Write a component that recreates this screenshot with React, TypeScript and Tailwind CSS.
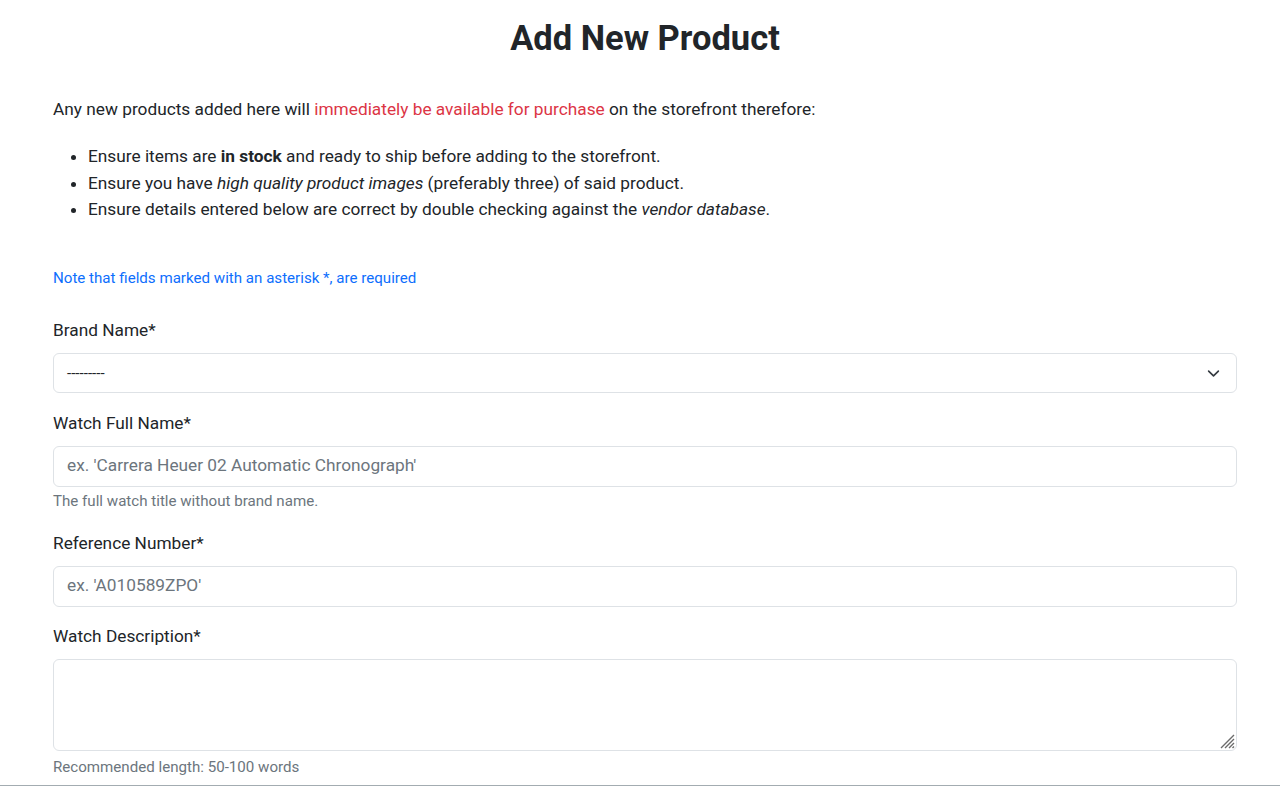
import React from "react";

export default function App() {
  const font = { fontFamily: "Roboto, 'Liberation Sans', sans-serif" };
  return (
    <div
      className="h-[786px] w-[1280px] overflow-hidden bg-white text-[#212529] border-b border-[#a3acb1]"
      style={font}
    >
      <div className="ml-[53px] w-[1184px]">
        <h1 className="mt-[18px] text-center text-[34.5px] leading-[41px] font-bold text-[#212529]">
          Add New Product
        </h1>
        <p className="mt-[37px] text-[17.28px] leading-[26px]">
          Any new products added here will{" "}
          <span className="text-[#dc3545]">immediately be available for purchase</span> on the
          storefront therefore:
        </p>
        <ul className="mt-[21px] list-disc pl-[35px] text-[17.28px] leading-[26.5px]">
          <li>
            Ensure items are <b className="font-bold">in stock</b> and ready to ship before adding to
            the storefront.
          </li>
          <li>
            Ensure you have <i>high quality product images</i> (preferably three) of said product.
          </li>
          <li>
            Ensure details entered below are correct by double checking against the{" "}
            <i>vendor database</i>.
          </li>
        </ul>
        <p className="mt-[44px] text-[15.12px] leading-[22px] text-[#0d6efd]">
          Note that fields marked with an asterisk *, are required
        </p>

        <form className="mt-[28px]">
          <label className="block text-[17.28px] leading-[26px]">Brand Name*</label>
          <div className="relative mt-[10px] h-[40px] rounded-[6px] border border-[#dee2e6] bg-white">
            <span className="absolute left-[13px] top-[9px] text-[15.12px] leading-[20px] text-[#212529]">
              ---------
            </span>
            <svg
              className="absolute right-[16px] top-[13px]"
              width="13"
              height="13"
              viewBox="0 0 16 16"
              fill="none"
              stroke="#343a40"
              strokeWidth="2"
              strokeLinecap="round"
              strokeLinejoin="round"
            >
              <path d="m2 5 6 6 6-6" />
            </svg>
          </div>

          <label className="mt-[17px] block text-[17.28px] leading-[26px]">Watch Full Name*</label>
          <div className="mt-[10px] flex h-[41px] items-center rounded-[6px] border border-[#dee2e6] px-[13px] text-[17.28px] text-[#6c757d]">
            ex. 'Carrera Heuer 02 Automatic Chronograph'
          </div>
          <p className="mt-[3px] text-[15.12px] leading-[22px] text-[#6c757d]">
            The full watch title without brand name.
          </p>

          <label className="mt-[18px] block text-[17.28px] leading-[26px]">Reference Number*</label>
          <div className="mt-[10px] flex h-[41px] items-center rounded-[6px] border border-[#dee2e6] px-[13px] text-[17.28px] text-[#6c757d]">
            ex. 'A010589ZPO'
          </div>

          <label className="mt-[16px] block text-[17.28px] leading-[26px]">Watch Description*</label>
          <div className="relative mt-[10px] h-[92px] rounded-[6px] border border-[#dee2e6]">
            <svg
              className="absolute right-[1px] bottom-[1px]"
              width="18"
              height="18"
              viewBox="0 0 18 18"
              stroke="#6b6b6b"
              strokeWidth="1.4"
            >
              <path d="M17 4 4 17M17 8 8 17M17 12 12 17M17 15.5 15.5 17" />
            </svg>
          </div>
          <p className="mt-[5px] text-[15.12px] leading-[22px] text-[#6c757d]">
            Recommended length: 50-100 words
          </p>
        </form>
      </div>
    </div>
  );
}
